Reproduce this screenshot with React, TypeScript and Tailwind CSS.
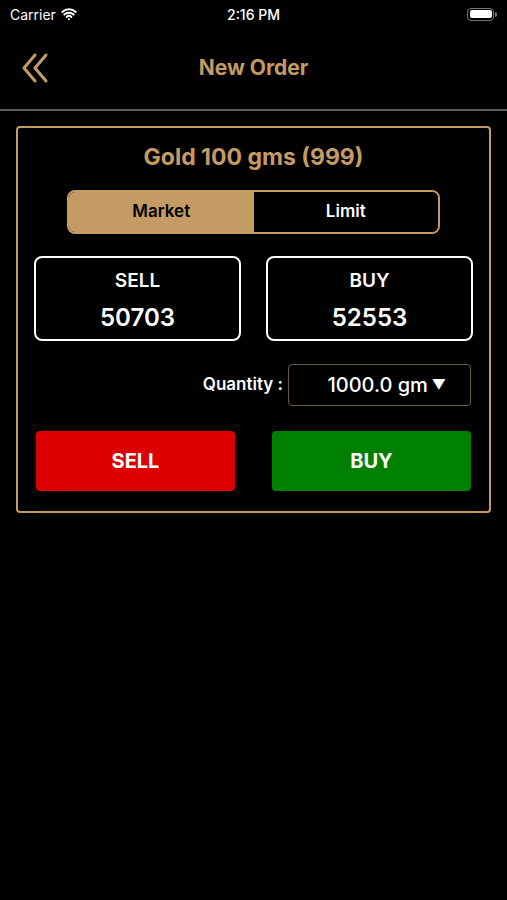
import { Wifi } from "lucide-react";

const GOLD = "#c49b63";

function StatusBar() {
  return (
    <div className="relative flex h-[28px] items-center justify-between px-[10px] text-white text-[14px]">
      <div className="flex items-center gap-[5px]">
        <span>Carrier</span>
        <Wifi size={16} strokeWidth={3} />
      </div>
      <span className="absolute left-1/2 -translate-x-1/2 font-medium">2:16 PM</span>
      <div className="flex items-center">
        <div className="flex h-[13px] w-[27px] items-center rounded-[4px] border border-[#777] p-[1.5px]">
          <div className="h-full w-full rounded-[2px] bg-white" />
        </div>
        <div className="ml-[1px] h-[5px] w-[2px] rounded-r-sm bg-[#777]" />
      </div>
    </div>
  );
}

function NavBar() {
  return (
    <div className="relative flex h-[83px] items-center justify-center border-b-2 border-[#5e5e5e]">
      <button className="absolute left-[20px] top-[24px]">
        <svg width="30" height="33" viewBox="0 0 30 33" fill="none" stroke={GOLD} strokeWidth="3" strokeLinecap="round" strokeLinejoin="round">
          <path d="M15 3 L4 16 L15 29" />
          <path d="M26 3 L15 16 L26 29" />
        </svg>
      </button>
      <h1 className="text-[21px] font-bold text-[#c49b63] -mt-[2px]">New Order</h1>
    </div>
  );
}

function PriceBox({ label, value }: { label: string; value: string }) {
  return (
    <div className="flex h-[85px] flex-1 flex-col items-center rounded-[8px] border-2 border-white pt-[11px] text-white">
      <span className="text-[19px] font-semibold leading-[24px]">{label}</span>
      <span className="mt-[11px] text-[24px] font-semibold leading-[28px]">{value}</span>
    </div>
  );
}

export default function App() {
  return (
    <div className="min-h-[900px] w-full bg-black font-['Inter',sans-serif]">
      <StatusBar />
      <NavBar />

      <div className="mx-[16px] mt-[15px] rounded-[4px] border-2 border-[#c49b63] px-[16px] pt-[15px] pb-[20px]">
        <h2 className="text-center text-[23px] font-bold leading-[28px] text-[#c49b63]">
          Gold 100 gms (999)
        </h2>

        <div className="mx-auto mt-[19px] flex h-[44px] w-[373px] overflow-hidden rounded-[8px] border-2 border-[#c49b63]">
          <button className="flex-1 bg-[#c49b63] text-[17px] font-semibold text-black">Market</button>
          <button className="flex-1 bg-black text-[17px] font-semibold text-white">Limit</button>
        </div>

        <div className="mt-[22px] flex gap-[25px]">
          <PriceBox label="SELL" value="50703" />
          <PriceBox label="BUY" value="52553" />
        </div>

        <div className="mt-[23px] flex items-center justify-end pr-[2px]">
          <span className="mr-[5px] text-[17px] font-semibold text-white">Quantity :</span>
          <div className="flex h-[42px] w-[183px] items-center justify-end rounded-[4px] border border-[#6b5a3f] pr-[24px] text-white">
            <span className="text-[20px] font-medium">1000.0 gm</span>
            <span className="ml-[4px] text-[14px] leading-none">▼</span>
          </div>
        </div>

        <div className="mt-[25px] flex justify-between px-[2px]">
          <button className="h-[60px] w-[199px] rounded-[4px] bg-[#dd0000] text-[20px] font-bold text-white">
            SELL
          </button>
          <button className="h-[60px] w-[199px] rounded-[4px] bg-[#008000] text-[20px] font-bold text-white">
            BUY
          </button>
        </div>
      </div>
    </div>
  );
}
